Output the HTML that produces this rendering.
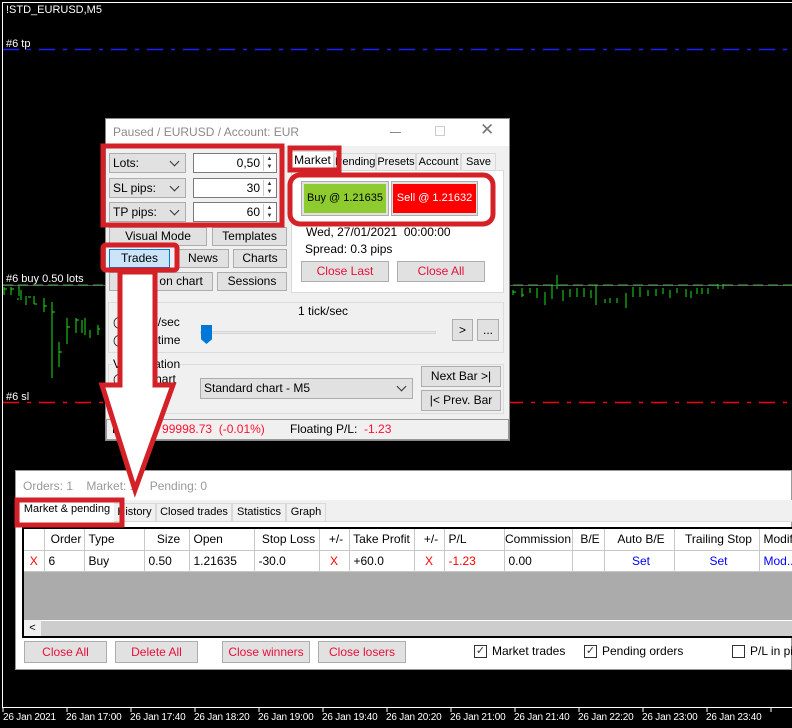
<!DOCTYPE html>
<html><head><meta charset="utf-8"><style>
*{box-sizing:border-box;margin:0;padding:0}
body{width:792px;height:728px;background:#000;position:relative;overflow:hidden;font-family:"Liberation Sans",sans-serif;font-size:12px;color:#000}
.a{position:absolute;white-space:nowrap}
.btn{position:absolute;background:#e1e1e1;border:1px solid #adadad;text-align:center;font-size:12px;line-height:17px;white-space:nowrap}
.red{color:#e8103a}
.cb{position:absolute;background:#e1e1e1;border:1px solid #adadad;font-size:12px;line-height:18px;padding-left:3px;white-space:nowrap}
.cb:after{content:"";position:absolute;right:7px;top:4px;width:6px;height:6px;border-right:1px solid #333;border-bottom:1px solid #333;transform:rotate(45deg)}
.inp{position:absolute;background:#fff;border:1px solid #7a7a7a;text-align:right;padding-right:16px;line-height:18px;font-size:12px}
.spin{position:absolute;right:1px;top:1px;width:12px;height:16px;border-left:1px solid #ccc;font-size:6px;line-height:8px;text-align:center;color:#333}
.tab{position:absolute;background:#f0f0f0;border:1px solid #d9d9d9;text-align:center;line-height:17px;font-size:11px;white-space:nowrap;overflow:hidden}
.w{color:#fff;font-size:11px}
.t{color:#fff;font-size:10px;letter-spacing:-0.2px}
table{border-collapse:collapse;table-layout:fixed;font-size:12px}
td{border-right:1px solid #c8c8c8;border-bottom:1px solid #c8c8c8;height:21px;padding-left:4px;white-space:nowrap;overflow:hidden}
</style></head><body>
<div class="a" style="left:2px;top:2px;width:790px;height:706px;border-left:1px solid #fff;border-top:1px solid #fff;border-bottom:1px solid #fff"></div>
<div class="a w" style="left:6px;top:4px">!STD_EURUSD,M5</div>
<div class="a w" style="left:6px;top:38px">#6 tp</div>
<div class="a w" style="left:6px;top:391px">#6 sl</div>
<div class="a w" style="left:6px;top:273px">#6 buy 0.50 lots</div>
<svg class="a" style="left:0;top:0" width="792" height="728">
<line x1="3" y1="49.5" x2="792" y2="49.5" stroke="#2020ff" stroke-width="1.5" stroke-dasharray="16,8,4,8"/>
<line x1="3" y1="402.5" x2="792" y2="402.5" stroke="#f00010" stroke-width="1.5" stroke-dasharray="16,8,4,8"/>
<line x1="3" y1="285" x2="792" y2="285" stroke="#1f7a1f" stroke-width="1.5" stroke-dasharray="10,5"/>
<line x1="3" y1="285.5" x2="792" y2="285.5" stroke="#888" stroke-width="1" opacity=".6"/>
<g stroke="#20e020" stroke-width="1" fill="none">
<path d="M4 287v8M4 289h3M11 287v8M11 289h3M19 286v10M21 290v10M19 299h-2M26 296v9M28 297h3M34 296v8M34 304h3M44 298v14M44 306h3M52 302v76M52 312h3M59 342v25M59 352h3M67 318v26M67 327h3M76 318v15M76 320h3M82 320v13M85 318v17M90 330v8M98 325v10M98 329h2"/>
<path d="M513 290v5M513 292h3M522 288v9M522 295h2M530 288v5M537 288v10M545 292v13M552 285v14M557 275v14M563 290v11M570 289v8M577 288v9M584 288v9M591 290v8M596 285v20M605 299v4M610 298v5M617 298v5M626 293v15M633 287v10M640 287v10M648 290v6M656 289v7M663 288v6M670 290v8M677 288v5M686 289v8M691 291v7M697 288v6M702 288v6M708 288v6M718 284v5M723 284v5"/>
</g>
<line x1="3" y1="707.5" x2="792" y2="707.5" stroke="#fff"/>
<g stroke="#fff"><path d="M3 708v4M67 708v4M131 708v4M195 708v4M259 708v4M323 708v4M387 708v4M451 708v4M515 708v4M579 708v4M643 708v4M707 708v4M771 708v4"/></g>
</svg>
<div class="a t" style="left:3px;top:712px">26 Jan 2021</div>
<div class="a t" style="left:66px;top:712px">26 Jan 17:00</div>
<div class="a t" style="left:130px;top:712px">26 Jan 17:40</div>
<div class="a t" style="left:194px;top:712px">26 Jan 18:20</div>
<div class="a t" style="left:258px;top:712px">26 Jan 19:00</div>
<div class="a t" style="left:322px;top:712px">26 Jan 19:40</div>
<div class="a t" style="left:386px;top:712px">26 Jan 20:20</div>
<div class="a t" style="left:450px;top:712px">26 Jan 21:00</div>
<div class="a t" style="left:514px;top:712px">26 Jan 21:40</div>
<div class="a t" style="left:578px;top:712px">26 Jan 22:20</div>
<div class="a t" style="left:642px;top:712px">26 Jan 23:00</div>
<div class="a t" style="left:706px;top:712px">26 Jan 23:40</div>

<div class="a" style="left:105px;top:118px;width:405px;height:323px;background:#f0f0f0;border:1px solid #888"></div>
<div class="a" style="left:106px;top:119px;width:403px;height:27px;background:#fff"></div>
<div class="a" style="left:113px;top:125px;color:#8a8a8a;font-size:12px">Paused / EURUSD / Account: EUR</div>
<div class="a" style="left:390px;top:132px;width:11px;height:1px;background:#888"></div>
<div class="a" style="left:435px;top:126px;width:10px;height:10px;border:1px solid #ccc"></div>
<div class="a" style="left:480px;top:120px;color:#777;font-size:17px">✕</div>

<div class="cb" style="left:109px;top:153px;width:77px;height:20px">Lots:</div>
<div class="cb" style="left:109px;top:178px;width:77px;height:20px">SL pips:</div>
<div class="cb" style="left:109px;top:202px;width:77px;height:20px">TP pips:</div>
<div class="inp" style="left:193px;top:153px;width:84px;height:20px">0,50<div class="spin">▲<br>▼</div></div>
<div class="inp" style="left:193px;top:178px;width:84px;height:20px">30<div class="spin">▲<br>▼</div></div>
<div class="inp" style="left:193px;top:202px;width:84px;height:20px">60<div class="spin">▲<br>▼</div></div>
<div class="btn" style="left:109px;top:227px;width:98px;height:19px">Visual Mode</div>
<div class="btn" style="left:212px;top:227px;width:75px;height:19px">Templates</div>
<div class="btn" style="left:109px;top:249px;width:61px;height:19px;background:#cce4f7;border-color:#0078d7">Trades</div>
<div class="btn" style="left:177px;top:249px;width:52px;height:19px">News</div>
<div class="btn" style="left:233px;top:249px;width:54px;height:19px">Charts</div>
<div class="btn" style="left:109px;top:272px;width:104px;height:19px">Trades on chart</div>
<div class="btn" style="left:217px;top:272px;width:70px;height:19px">Sessions</div>

<div class="a" style="left:291px;top:170px;width:213px;height:123px;background:#fff;border:1px solid #d9d9d9"></div>
<div class="tab" style="left:334px;top:153px;width:42px;height:18px">Pending</div>
<div class="tab" style="left:376px;top:153px;width:40px;height:18px">Presets</div>
<div class="tab" style="left:416px;top:153px;width:45px;height:18px">Account</div>
<div class="tab" style="left:461px;top:153px;width:35px;height:18px">Save</div>
<div class="tab" style="left:291px;top:151px;width:43px;height:20px;background:#fff;border-bottom:none;font-size:12px">Market</div>
<div class="a" style="left:301px;top:181px;width:88px;height:35px;border:1px solid #adadad;background:#e1e1e1"></div>
<div class="a" style="left:304px;top:184px;width:82px;height:29px;background:#8ecb2f;text-align:center;line-height:29px;font-size:11px">Buy @ 1.21635</div>
<div class="a" style="left:391px;top:181px;width:87px;height:35px;border:1px solid #adadad;background:#e1e1e1"></div>
<div class="a" style="left:393px;top:184px;width:83px;height:29px;background:#ff0000;color:#fff;text-align:center;line-height:29px;font-size:11px">Sell @ 1.21632</div>
<div class="a" style="left:306px;top:225px">Wed, 27/01/2021&nbsp;&nbsp;00:00:00</div>
<div class="a" style="left:305px;top:242px">Spread: 0.3 pips</div>
<div class="btn red" style="left:301px;top:261px;width:88px;height:21px;line-height:19px">Close Last</div>
<div class="btn red" style="left:397px;top:261px;width:88px;height:21px;line-height:19px">Close All</div>

<div class="a" style="left:108px;top:302px;width:396px;height:51px;border:1px solid #dcdcdc"></div>
<div class="a" style="left:298px;top:304px">1 tick/sec</div>
<div class="a" style="left:113px;top:315px">◯ 1 tick/sec</div>
<div class="a" style="left:113px;top:333px">◯ Real time</div>
<div class="a" style="left:200px;top:331px;width:236px;height:3px;background:#e7e7e7;border:1px solid #d6d6d6"></div>
<div class="a" style="left:201px;top:325px;width:11px;height:19px;background:#0078d7;clip-path:polygon(0 0,100% 0,100% 75%,50% 100%,0 75%)"></div>
<div class="btn" style="left:452px;top:319px;width:21px;height:22px;line-height:20px">&gt;</div>
<div class="btn" style="left:477px;top:319px;width:22px;height:22px;line-height:20px">...</div>

<div class="a" style="left:108px;top:364px;width:396px;height:50px;border:1px solid #dcdcdc"></div>
<div class="a" style="left:113px;top:357px;background:#f0f0f0">Visualization</div>
<div class="a" style="left:113px;top:372px">◯ On chart</div>
<div class="cb" style="left:200px;top:378px;width:213px;height:21px">Standard chart - M5</div>
<div class="btn" style="left:421px;top:366px;width:80px;height:21px;line-height:19px">Next Bar &gt;|</div>
<div class="btn" style="left:421px;top:390px;width:80px;height:21px;line-height:19px">|&lt; Prev. Bar</div>
<div class="a" style="left:106px;top:419px;width:403px;height:21px;border:1px solid #999;background:#f0f0f0"></div>
<div class="a" style="left:112px;top:422px">Balance: <span style="color:#ff1030">99998.73 &nbsp;(-0.01%)</span></div>
<div class="a" style="left:290px;top:422px">Floating P/L: &nbsp;<span style="color:#ff1030">-1.23</span></div>

<div class="a" style="left:15px;top:470px;width:777px;height:200px;background:#fff;border:1px solid #999"></div>
<div class="a" style="left:16px;top:500px;width:776px;height:22px;background:#f0f0f0;border-bottom:1px solid #dcdcdc"></div>
<div class="a" style="left:23px;top:479px;color:#999">Orders: 1 &nbsp;&nbsp; Market: 1 &nbsp;&nbsp; Pending: 0</div>
<div class="tab" style="left:113px;top:503px;width:43px;height:19px">History</div>
<div class="tab" style="left:156px;top:503px;width:76px;height:19px">Closed trades</div>
<div class="tab" style="left:232px;top:503px;width:54px;height:19px">Statistics</div>
<div class="tab" style="left:286px;top:503px;width:40px;height:19px">Graph</div>
<div class="tab" style="left:20px;top:501px;width:94px;height:21px;background:#fff;border:none">Market &amp; pending</div>
<div class="a" style="left:22px;top:527px;width:772px;height:111px;border:2px solid #000;background:#ababab"></div>
<table class="a" style="left:24px;top:529px;width:790px;background:#fff">
<colgroup><col style="width:20px"><col style="width:40px"><col style="width:60px"><col style="width:45px"><col style="width:65px"><col style="width:65px"><col style="width:30px"><col style="width:65px"><col style="width:30px"><col style="width:60px"><col style="width:68px"><col style="width:32px"><col style="width:70px"><col style="width:85px"><col style="width:55px"></colgroup>
<tr><td></td><td style="text-align:center">Order</td><td>Type</td><td style="text-align:center">Size</td><td>Open</td><td style="text-align:center">Stop Loss</td><td style="text-align:center">+/-</td><td style="text-align:center;padding:0">Take Profit</td><td style="text-align:center">+/-</td><td>P/L</td><td style="text-align:center;padding:0">Commission</td><td style="text-align:center">B/E</td><td style="text-align:center">Auto B/E</td><td style="text-align:center">Trailing Stop</td><td>Modify</td></tr>
<tr><td style="color:#f00;text-align:center;padding:0">X</td><td>6</td><td>Buy</td><td>0.50</td><td>1.21635</td><td>-30.0</td><td style="color:#f00;text-align:center;padding:0">X</td><td>+60.0</td><td style="color:#f00;text-align:center;padding:0">X</td><td style="color:#f00">-1.23</td><td>0.00</td><td></td><td style="color:#00f;text-align:center">Set</td><td style="color:#00f;text-align:center">Set</td><td style="color:#00f">Mod...</td></tr>
</table>
<div class="a" style="left:24px;top:620px;width:770px;height:16px;background:#cdcdcd;border-top:1px solid #fff"></div>
<div class="a" style="left:24px;top:620px;width:17px;height:16px;background:#f0f0f0;text-align:center;font-size:11px;line-height:16px">&lt;</div>
<div class="btn red" style="left:24px;top:641px;width:83px;height:22px;line-height:20px">Close All</div>
<div class="btn red" style="left:115px;top:641px;width:83px;height:22px;line-height:20px">Delete All</div>
<div class="btn red" style="left:222px;top:641px;width:88px;height:22px;line-height:20px">Close winners</div>
<div class="btn red" style="left:318px;top:641px;width:88px;height:22px;line-height:20px">Close losers</div>
<div class="a" style="left:474px;top:645px;width:13px;height:13px;border:1px solid #333;font-size:11px;line-height:11px;text-align:center;color:#333">✓</div>
<div class="a" style="left:492px;top:644px">Market trades</div>
<div class="a" style="left:584px;top:645px;width:13px;height:13px;border:1px solid #333;font-size:11px;line-height:11px;text-align:center;color:#333">✓</div>
<div class="a" style="left:602px;top:644px">Pending orders</div>
<div class="a" style="left:732px;top:645px;width:13px;height:13px;border:1px solid #333"></div>
<div class="a" style="left:750px;top:644px">P/L in pips</div>

<svg class="a" style="left:0;top:0" width="792" height="728" fill="none" stroke="#d42027" stroke-width="5">
<rect x="103" y="146" width="179" height="79"/>
<rect x="290" y="148" width="49" height="22"/>
<rect x="290" y="175" width="203" height="49" rx="10"/>
<rect x="103" y="245" width="74" height="25" rx="3"/>
<rect x="17" y="500" width="105" height="25"/>
<polygon points="120,272 155,272 155,385 173,385 135,490 102,385 120,385" fill="#fff"/>
</svg>
</body></html>
